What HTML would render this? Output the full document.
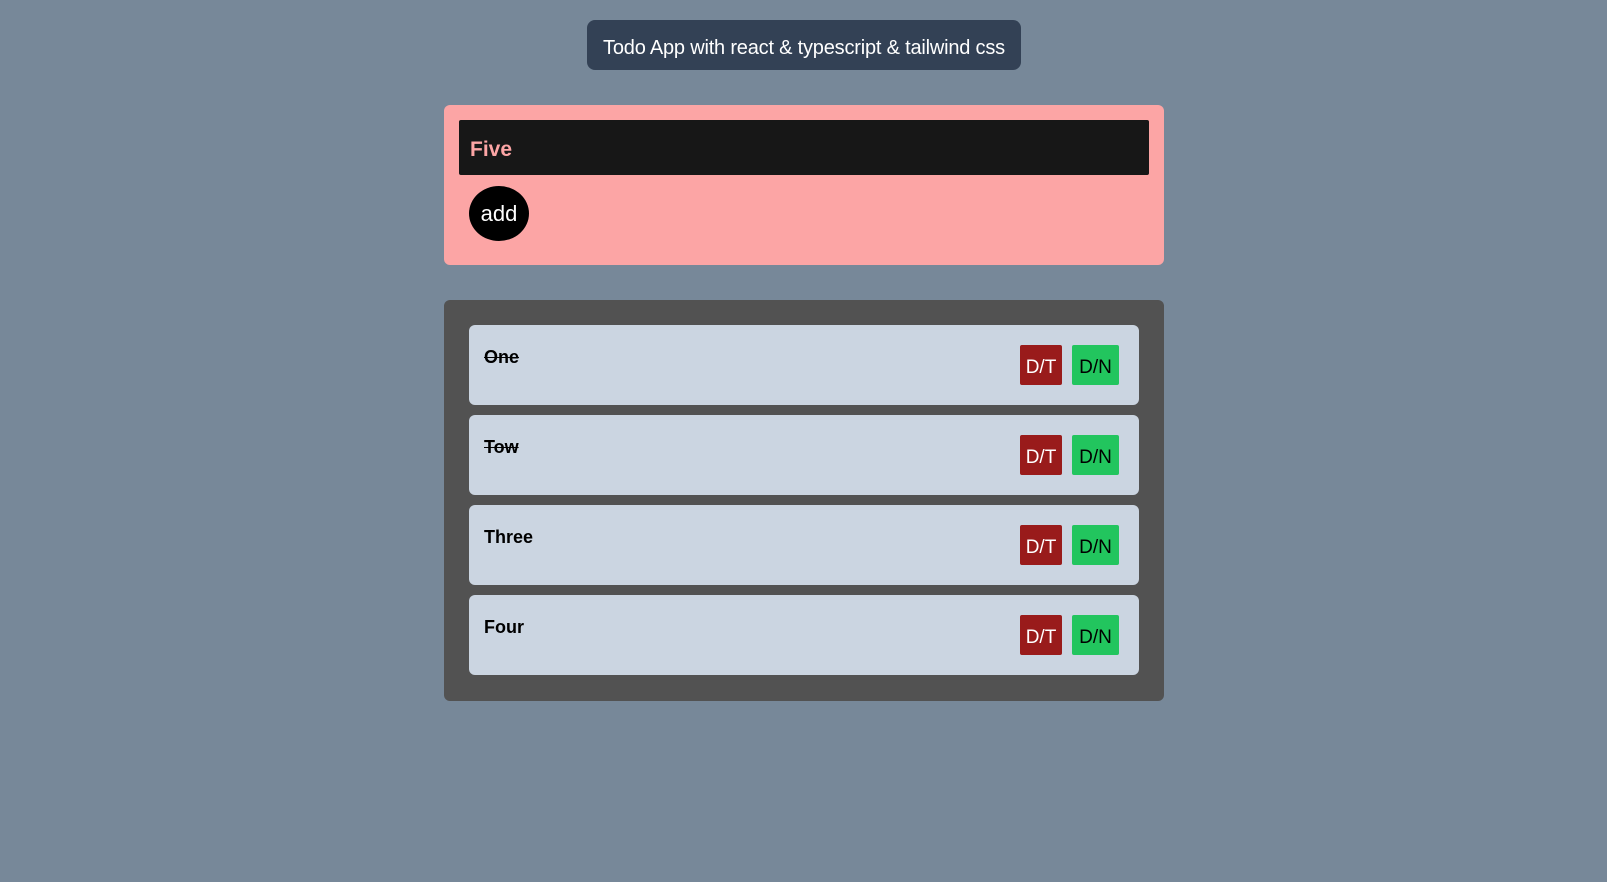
<!DOCTYPE html>
<html><head><style>
body{margin:0;width:1607px;height:882px;background:#778899;font-family:"Liberation Sans",sans-serif;position:relative;overflow:hidden}
.a{position:absolute;box-sizing:border-box}
.title{left:587px;top:20px;width:434px;height:50px;background:#334155;border-radius:8px;color:#fff;font-size:20px;line-height:50px;padding-top:6px;line-height:44px;text-align:center;letter-spacing:-0.2px}
.pink{left:444px;top:105px;width:720px;height:160px;background:#fca5a5;border-radius:6px}
.inp{left:459px;top:120px;width:690px;height:55px;background:#171717;border-radius:2px;color:#fca5a5;font-weight:bold;font-size:21px;line-height:59px;padding-left:11px}
.add{left:469px;top:186px;width:60px;height:55px;background:#000;border-radius:50%;color:#fff;font-size:22px;line-height:55px;text-align:center}
.dark{left:444px;top:300px;width:720px;height:401px;background:#525252;border-radius:6px}
.item{left:469px;width:670px;height:80px;background:#cbd5e1;border-radius:6px}
.t{position:absolute;left:15px;top:22px;font-weight:bold;font-size:18px;color:#000}
.s{text-decoration:line-through}
.b{position:absolute;top:20px;height:40px;font-size:19px;line-height:46px;text-align:center;border-radius:2px}
.dt{left:551px;width:42px;background:#991b1b;color:#fff}
.dn{left:603px;width:47px;background:#22c55e;color:#000}
</style></head><body>
<div class="a title">Todo App with react &amp; typescript &amp; tailwind css</div>
<div class="a pink"></div>
<div class="a inp">Five</div>
<div class="a add">add</div>
<div class="a dark"></div>
<div class="a item" style="top:325px"><span class="t s">One</span><div class="b dt">D/T</div><div class="b dn">D/N</div></div>
<div class="a item" style="top:415px"><span class="t s">Tow</span><div class="b dt">D/T</div><div class="b dn">D/N</div></div>
<div class="a item" style="top:505px"><span class="t">Three</span><div class="b dt">D/T</div><div class="b dn">D/N</div></div>
<div class="a item" style="top:595px"><span class="t">Four</span><div class="b dt">D/T</div><div class="b dn">D/N</div></div>
</body></html>
